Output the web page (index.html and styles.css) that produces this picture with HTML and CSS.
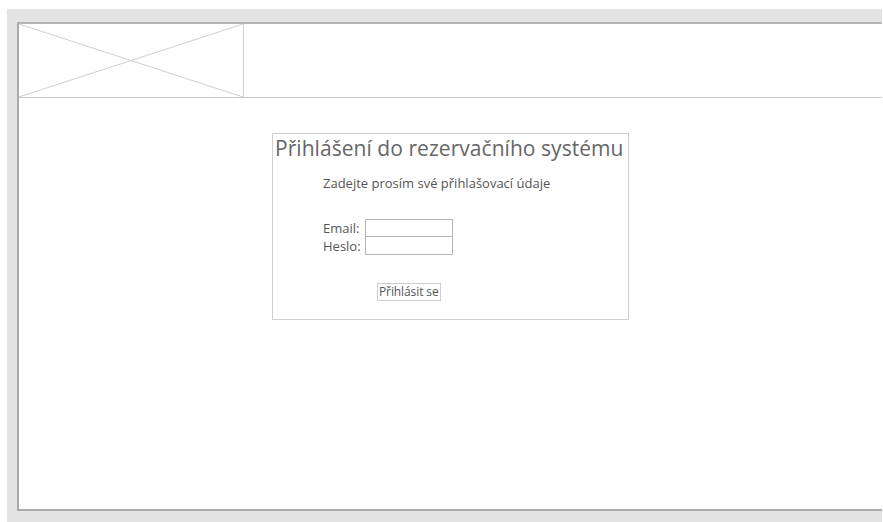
FILE: index.html
```html
<!DOCTYPE html>
<html lang="cs">
<head>
<meta charset="utf-8">
<title>Přihlášení</title>
<link rel="stylesheet" href="styles.css">
</head>
<body>
<div class="stage">
  <div class="frame">
    <header class="header">
      <div class="logo">
        <svg width="224" height="73" viewBox="0 0 224 73" preserveAspectRatio="none">
          <line x1="0" y1="0" x2="224" y2="73" stroke="#cfcfcf" stroke-width="1"/>
          <line x1="0" y1="73" x2="224" y2="0" stroke="#cfcfcf" stroke-width="1"/>
        </svg>
      </div>
    </header>
    <main class="content">
      <section class="login">
        <h1 class="login-title">Přihlášení do rezervačního systému</h1>
        <p class="login-hint">Zadejte prosím své přihlašovací údaje</p>
        <form class="login-form">
          <div class="field"><label class="field-label">Email:</label><span class="field-input"></span></div>
          <div class="field"><label class="field-label">Heslo:</label><span class="field-input"></span></div>
          <div class="actions"><span class="btn">Přihlásit se</span></div>
        </form>
      </section>
    </main>
  </div>
</div>
</body>
</html>
```
FILE: styles.css
```css
html, body {
  margin: 0;
  padding: 0;
  background: #ffffff;
  font-family: "Open Sans", "Noto Sans", sans-serif;
  color: #5f5f5f;
}

.stage {
  margin: 9px 1px 0 7px;
  height: 513px;
  box-sizing: border-box;
  background: #e3e3e3;
  padding: 13px 0 11px 10px;
  overflow: hidden;
}

.frame {
  width: calc(100% + 20px);
  height: 100%;
  box-sizing: border-box;
  background: #ffffff;
  border-top: 2px solid #b4b4b4;
  border-left: 2px solid #a9a9a9;
  border-bottom: 2px solid #a9a9a9;
  display: flex;
  flex-direction: column;
}

.header {
  height: 73px;
  border-bottom: 1px solid #cccccc;
  display: flex;
}

.logo {
  width: 224px;
  height: 73px;
  border-right: 1px solid #d2d2d2;
}

.logo svg {
  display: block;
}

.content {
  flex: 1;
  padding: 35px 0 0 253px;
}

.login {
  width: 357px;
  height: 187px;
  box-sizing: border-box;
  border: 1px solid #cfcfcf;
  padding: 1px 0 0 2px;
}

.login-title {
  margin: 0;
  font-weight: 400;
  font-size: 21px;
  line-height: 26px;
  color: #666666;
  letter-spacing: 0.05px;
  white-space: nowrap;
}

.login-hint {
  margin: 14px 0 0 48px;
  font-size: 13px;
  line-height: 16px;
  color: #555555;
  white-space: nowrap;
}

.login-form {
  margin: 28px 0 0 48px;
}

.field {
  display: flex;
  align-items: center;
  height: 18px;
}

.field-label {
  width: 42px;
  font-size: 13px;
  line-height: 16px;
  color: #555555;
}

.field-input {
  width: 88px;
  height: 18px;
  box-sizing: border-box;
  border: 1px solid #b5b5b5;
  background: #fff;
}

.field + .field .field-input {
  border-top: none;
}

.actions {
  margin: 24px 0 0 54px;
}

.btn {
  display: inline-block;
  border: 1px solid #cccccc;
  padding: 0 1px;
  font-size: 12px;
  line-height: 16px;
  color: #555555;
  letter-spacing: -0.1px;
}
```
